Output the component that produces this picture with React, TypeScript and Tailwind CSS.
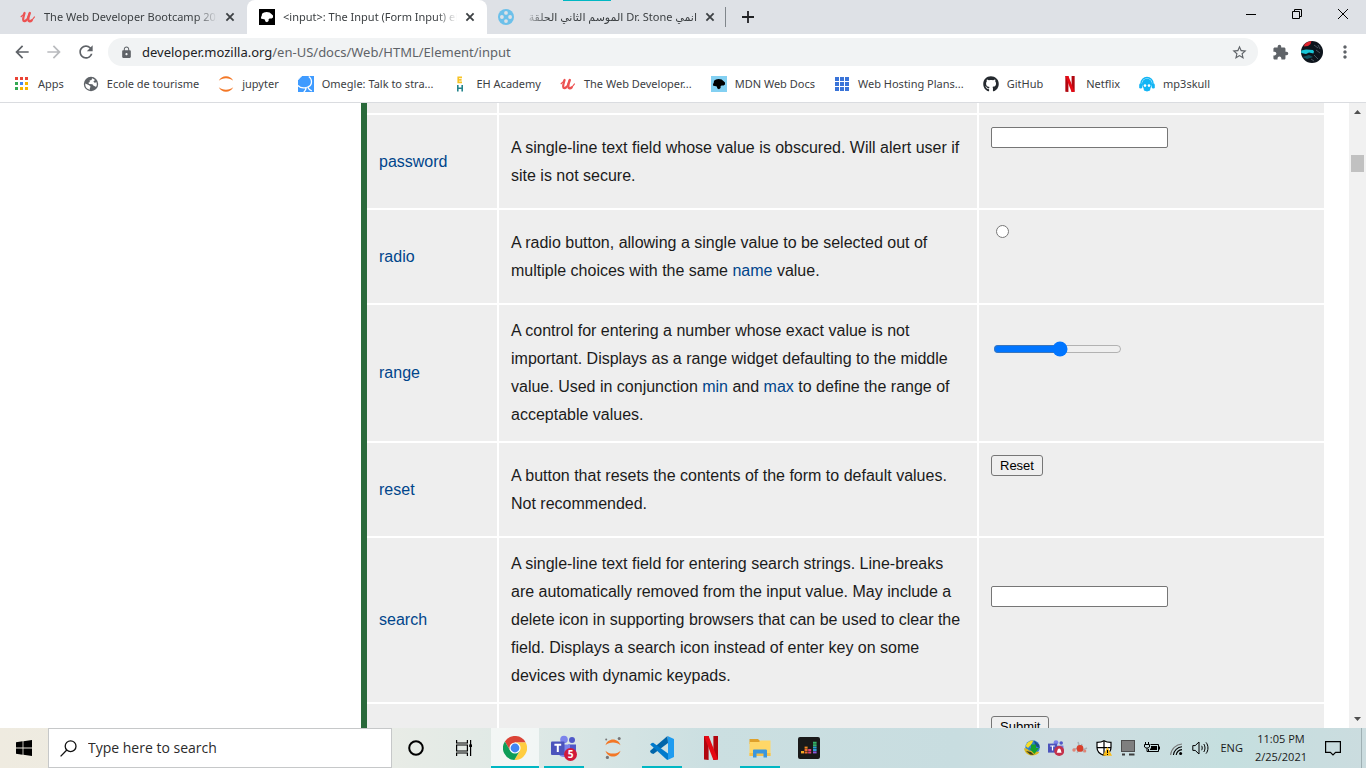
import type { ReactNode } from "react";
import {
  MdArrowBack,
  MdArrowForward,
  MdExtension,
  MdLock,
  MdMoreVert,
  MdRefresh,
  MdStarBorder,
} from "react-icons/md";
import { FaGithub } from "react-icons/fa";

/* ---------- Site icons ---------- */

function UdemyIcon() {
  return (
    <svg width="16" height="16" viewBox="0 0 16 16" fill="none" stroke="#ec5252" strokeLinecap="round" strokeLinejoin="round">
      <path d="M1.2 7.6C2.6 6.6 3.6 5.4 4.4 4" strokeWidth="1.3" />
      <path d="M4.6 4C3.9 6.4 3 8.8 3.2 10.8C3.4 12.6 5.2 12.6 6.4 11" strokeWidth="2.2" />
      <path d="M6.4 11C7.6 9.2 8.6 6.8 9.6 4" strokeWidth="1.3" />
      <path d="M9.8 4C8.9 6.4 8 8.8 8.3 10.8C8.6 12.6 10.4 12.8 11.6 11.4" strokeWidth="2.4" />
      <path d="M11.6 11.4C12.6 10.4 13.6 9.2 14.4 8" strokeWidth="1.3" />
    </svg>
  );
}

function DinoIcon({ blue = false }: { blue?: boolean }) {
  return (
    <svg width="16" height="16" viewBox="0 0 16 16">
      <rect width="16" height="16" fill={blue ? "#83d0f2" : "#000"} />
      <path
        fill={blue ? "#000" : "#fff"}
        d="M2 8.2L2.8 6.6L3 4.8L5 3.6L7.6 3L10.6 3.6L12.4 5L14 6.6L14 8.6L12.6 9.4L10.6 9.4L9.6 10.2L9.6 12L8 13.2L6.4 12.4L5.8 10.6L4 10L2.2 9.8Z"
      />
    </svg>
  );
}

function ReelIcon() {
  return (
    <svg width="16" height="16" viewBox="0 0 16 16">
      <circle cx="8" cy="8" r="8" fill="#6cc0ea" />
      <g fill="#dee1e6">
        <circle cx="8" cy="3.9" r="1.9" />
        <circle cx="8" cy="12.1" r="1.9" />
        <circle cx="3.9" cy="8" r="1.9" />
        <circle cx="12.1" cy="8" r="1.9" />
      </g>
    </svg>
  );
}

function AppsIcon() {
  return (
    <svg width="16" height="16" viewBox="0 0 16 16">
      <path fill="#ea4335" d="M1 1h3v3H1zM6 1h3v3H6zM11 1h3v3h-3z" />
      <path fill="#34a853" d="M1 6h3v3H1zM1 11h3v3H1z" />
      <path fill="#4285f4" d="M6 6h3v3H6z" />
      <path fill="#f6b400" d="M11 6h3v3h-3zM6 11h3v3H6zM11 11h3v3h-3z" />
    </svg>
  );
}

function GlobeIcon() {
  return (
    <svg width="16" height="16" viewBox="0 0 16 16">
      <circle cx="8" cy="8" r="7.2" fill="#5f6368" />
      <path
        fill="#fff"
        d="M2.2 7.6L6.2 9.2L7.6 10.8L6.8 12.2L7 13.8A6 6 0 0 1 2.2 7.6ZM9 2.2L8.6 4L6.6 4.6L6.8 6L5.4 6.8L6 8L9.4 8.2L10.6 9.8L12.4 10.4L13 11A6 6 0 0 0 13.6 6.2L11.6 6.8L10.4 5.6L12 4A6 6 0 0 0 9 2.2Z"
      />
    </svg>
  );
}

function JupyterIcon() {
  return (
    <svg width="16" height="16" viewBox="0 0 16 16" fill="#f37726">
      <path d="M.8 4.8C2.2 2 4.9 .3 8 .3S13.8 2 15.2 4.8C13.4 3.2 10.9 2.3 8 2.3S2.6 3.2 .8 4.8Z" />
      <path d="M.8 11.2C2.2 14 4.9 15.7 8 15.7S13.8 14 15.2 11.2C13.4 12.8 10.9 13.7 8 13.7S2.6 12.8 .8 11.2Z" />
    </svg>
  );
}

function OmegleIcon() {
  return (
    <svg width="16" height="16" viewBox="0 0 16 16">
      <path fill="#3f9bff" d="M0 0H16V16H0Z" />
      <g fill="none" stroke="#fff" strokeWidth="1.3">
        <path d="M0 3.6C1 2 2.2 .9 3.6 0" />
        <path d="M0 9.4C1.6 11.6 4.4 12.4 8.2 11.6C8 13.2 7.2 14.8 5.8 16" />
        <path d="M10.8 .6C12.8 2.2 13.8 4.6 13.4 7C13 9.2 11.6 10.6 9.8 11.2C10.6 13 12 14.2 13.8 14.8" />
      </g>
      <path fill="#fff" d="M0 0H3L0 3Z" />
    </svg>
  );
}

function EhIcon() {
  return (
    <svg width="16" height="16" viewBox="0 0 16 16" fill="none" strokeWidth="1.6">
      <path stroke="#f7c325" d="M10 1.4H6.2V6.4H10M6 3.9H9.6" />
      <path stroke="#23848c" d="M5.8 9V15.4M10.2 9V15.4M6 12.2H10" />
    </svg>
  );
}

function GridIcon() {
  return (
    <svg width="16" height="16" viewBox="0 0 16 16" fill="#3a74d8">
      <path d="M1 1h4v4H1zM6 1h4v4H6zM11 1h4v4h-4zM1 6h4v4H1zM6 6h4v4H6zM11 6h4v4h-4zM1 11h4v4H1zM6 11h4v4H6zM11 11h4v4h-4z" />
    </svg>
  );
}

function NetflixIcon({ size }: { size: number }) {
  return (
    <svg width={size} height={size} viewBox="0 0 24 24">
      <path fill="#b1060f" d="M5 0H9.6V24L5 23.6ZM14.4 0H19V23.6L14.4 24Z" />
      <path fill="#e50914" d="M5 0H9.6L19 23.6L14.4 24Z" />
    </svg>
  );
}

function SkullIcon() {
  return (
    <svg width="16" height="16" viewBox="0 0 16 16">
      <path d="M2 9V7.5A6 6 0 0 1 14 7.5V9" fill="none" stroke="#12b5f5" strokeWidth="1.4" />
      <path fill="#12b5f5" d="M8 2.6A5 5 0 0 1 13 8C13 10 12 11 11.6 11.8L11 14.4L8 15.6L5 14.4L4.4 11.8C4 11 3 10 3 8A5 5 0 0 1 8 2.6Z" />
      <rect x=".2" y="7.6" width="3" height="5" rx="1.4" fill="#12b5f5" />
      <rect x="12.8" y="7.6" width="3" height="5" rx="1.4" fill="#12b5f5" />
      <circle cx="6" cy="9.6" r="1.3" fill="#fff" />
      <circle cx="10" cy="9.6" r="1.3" fill="#fff" />
    </svg>
  );
}

function CloseIcon() {
  return (
    <svg width="10" height="10" viewBox="0 0 10 10" stroke="#3c4043" strokeWidth="1.8">
      <path d="M1.4 1.4L8.6 8.6M8.6 1.4L1.4 8.6" />
    </svg>
  );
}

/* ---------- Tab strip ---------- */

type TabProps = { icon: ReactNode; title: string; active?: boolean; rtl?: boolean };

function Tab({ icon, title, active, rtl }: TabProps) {
  return (
    <div
      className={
        active
          ? "flex h-full w-60 min-w-0 items-center rounded-t-lg bg-white px-3"
          : "flex h-full w-60 min-w-0 items-center pl-[11px] pr-3"
      }
    >
      <span className="shrink-0">{icon}</span>
      <span
        dir={rtl ? "rtl" : "ltr"}
        className={
          rtl
            ? "ml-2 min-w-0 flex-1 overflow-hidden whitespace-nowrap [mask-image:linear-gradient(to_left,black_85%,transparent)]"
            : "ml-2 min-w-0 flex-1 overflow-hidden whitespace-nowrap [mask-image:linear-gradient(to_right,black_88%,transparent)]"
        }
      >
        {title}
      </span>
      <button type="button" aria-label="Close tab" className="ml-2 shrink-0">
        <CloseIcon />
      </button>
    </div>
  );
}

function TabStrip() {
  return (
    <div className="relative flex h-[34px] shrink-0 bg-[#dee1e6] pl-[7px] text-[11px] text-[#3c4043]">
      <div className="absolute left-[563px] top-0 h-px w-12 bg-[#00b7c3]" />
      <Tab icon={<span className="block pl-0.5"><UdemyIcon /></span>} title="The Web Developer Bootcamp 2021" />
      <Tab icon={<DinoIcon />} title="<input>: The Input (Form Input) element" active />
      <Tab icon={<ReelIcon />} title="انمي Dr. Stone الموسم الثاني الحلقة" rtl />
      <div className="flex items-center gap-4">
        <div className="-ml-0.5 h-5 w-px bg-[#80868b]" />
        <button type="button" aria-label="New tab">
          <svg width="12" height="12" viewBox="0 0 12 12" stroke="#202124" strokeWidth="1.8">
            <path d="M6 0V12M0 6H12" />
          </svg>
        </button>
      </div>
      <div className="ml-auto flex h-7 text-black">
        <button type="button" aria-label="Minimize" className="flex w-[46px] items-center justify-center">
          <svg width="10" height="10" viewBox="0 0 10 10" stroke="currentColor">
            <path d="M0 5.5H10" />
          </svg>
        </button>
        <button type="button" aria-label="Restore" className="flex w-[46px] items-center justify-center">
          <svg width="10" height="10" viewBox="0 0 10 10" fill="none" stroke="currentColor">
            <path d="M.5 2.5H7.5V9.5H.5ZM2.5 2V.5H9.5V7.5H8" />
          </svg>
        </button>
        <button type="button" aria-label="Close" className="flex w-[46px] items-center justify-center">
          <svg width="10" height="10" viewBox="0 0 10 10" stroke="currentColor">
            <path d="M0 0L10 10M10 0L0 10" />
          </svg>
        </button>
      </div>
    </div>
  );
}

/* ---------- Toolbar ---------- */

function Avatar() {
  return (
    <svg width="22" height="22" viewBox="0 0 22 22">
      <circle cx="11" cy="11" r="11" fill="#0d141c" />
      <path d="M3.6 3A11 11 0 0 1 10.4 0L9.6 3L7 5L3 5.4Z" fill="#e0222c" />
      <path d="M.2 9.4L5 8.6L12 9L13 10.4L12.4 12.4L8 11.4L5 13L.2 12Z" fill="#18c7d8" />
      <path d="M1.5 16L8 14L12 16L6 18Z" fill="#0f5563" />
      <path d="M13 4L17 7M15 9L19 12M13 14L17 18M17 4L19 8M10 18L13 20" stroke="#4a5560" />
    </svg>
  );
}

function Toolbar() {
  return (
    <div className="flex h-9 shrink-0 items-center bg-white pl-3 pr-[11px] text-[#5f6368]">
      <div className="flex gap-3">
        <button type="button" aria-label="Back">
          <MdArrowBack size={20} />
        </button>
        <button type="button" aria-label="Forward" className="text-[#b9bbbe]">
          <MdArrowForward size={20} />
        </button>
        <button type="button" aria-label="Reload">
          <MdRefresh size={20} />
        </button>
      </div>
      <div className="ml-3 flex h-7 min-w-0 flex-1 items-center rounded-full bg-[#f1f3f4] pl-3 pr-2.5">
        <MdLock size={13} />
        <div className="relative ml-[9px] min-w-0 flex-1 text-[13px] leading-5">
          <div aria-hidden="true" className="overflow-hidden whitespace-nowrap">
            <span className="text-[#202124]">developer.mozilla.org</span>
            <span>/en-US/docs/Web/HTML/Element/input</span>
          </div>
          <input
            type="text"
            aria-label="Address and search bar"
            defaultValue="developer.mozilla.org/en-US/docs/Web/HTML/Element/input"
            className="absolute inset-0 w-full bg-transparent text-transparent caret-black outline-none"
          />
        </div>
        <button type="button" aria-label="Bookmark this page">
          <MdStarBorder size={17} />
        </button>
      </div>
      <div className="ml-3.5 flex items-center">
        <button type="button" aria-label="Extensions">
          <MdExtension size={17} />
        </button>
        <button type="button" aria-label="Profile" className="ml-3">
          <Avatar />
        </button>
        <button type="button" aria-label="Menu" className="ml-3">
          <MdMoreVert size={20} />
        </button>
      </div>
    </div>
  );
}

/* ---------- Bookmarks ---------- */

const bookmarks: { label: string; icon: ReactNode }[] = [
  { label: "Apps", icon: <AppsIcon /> },
  { label: "Ecole de tourisme", icon: <GlobeIcon /> },
  { label: "jupyter", icon: <JupyterIcon /> },
  { label: "Omegle: Talk to stra...", icon: <OmegleIcon /> },
  { label: "EH Academy", icon: <EhIcon /> },
  { label: "The Web Developer...", icon: <UdemyIcon /> },
  { label: "MDN Web Docs", icon: <DinoIcon blue /> },
  { label: "Web Hosting Plans...", icon: <GridIcon /> },
  { label: "GitHub", icon: <FaGithub size={16} color="#24292e" /> },
  { label: "Netflix", icon: <NetflixIcon size={16} /> },
  { label: "mp3skull", icon: <SkullIcon /> },
];

function BookmarkBar() {
  return (
    <nav className="flex shrink-0 gap-[19px] overflow-hidden border-b border-[#dadce0] bg-white pb-1 pl-3.5 text-[11px] text-[#3c4043]">
      {bookmarks.map((b) => (
        <a key={b.label} href="#" className="flex h-7 shrink-0 items-center gap-2 whitespace-nowrap">
          {b.icon}
          {b.label}
        </a>
      ))}
    </nav>
  );
}

/* ---------- Article ---------- */

const linkClass = "text-[#00458b]";
const fieldClass = "block h-[21px] w-[177px] rounded-xs border border-[#767676] bg-white px-1 text-[13px]";
const buttonClass =
  "block h-[21px] rounded-[3px] border border-[#767676] bg-[#efefef] px-2 text-[13px] leading-4 text-black";

const rows: { type: string; text: ReactNode; demo: ReactNode }[] = [
  {
    type: "password",
    text: "A single-line text field whose value is obscured. Will alert user if site is not secure.",
    demo: <input type="password" aria-label="Password example" className={fieldClass} />,
  },
  {
    type: "radio",
    text: (
      <>
        A radio button, allowing a single value to be selected out of multiple choices with the same{" "}
        <a href="#name" className={linkClass}>name</a> value.
      </>
    ),
    demo: <input type="radio" aria-label="Radio example" className="mx-[5px] my-[3px] block" />,
  },
  {
    type: "range",
    text: (
      <>
        A control for entering a number whose exact value is not important. Displays as a range widget
        defaulting to the middle value. Used in conjunction{" "}
        <a href="#min" className={linkClass}>min</a> and <a href="#max" className={linkClass}>max</a> to
        define the range of acceptable values.
      </>
    ),
    demo: (
      <input
        type="range"
        defaultValue={52}
        aria-label="Range example"
        className="m-0.5 block h-4 w-[129px] accent-[#0075ff]"
      />
    ),
  },
  {
    type: "reset",
    text: "A button that resets the contents of the form to default values. Not recommended.",
    demo: <button type="reset" className={buttonClass}>Reset</button>,
  },
  {
    type: "search",
    text: "A single-line text field for entering search strings. Line-breaks are automatically removed from the input value. May include a delete icon in supporting browsers that can be used to clear the field. Displays a search icon instead of enter key on some devices with dynamic keypads.",
    demo: <input type="search" aria-label="Search example" className={fieldClass} />,
  },
  {
    type: "",
    text: "",
    demo: <button type="submit" className={buttonClass}>Submit</button>,
  },
];

function Article() {
  return (
    <main className="min-w-0 flex-1 overflow-hidden bg-white pl-[361px] pr-[25px]">
      <table className="w-full table-fixed border-separate border-spacing-0 border-l-[6px] border-[#29693a] font-['Liberation_Sans',Arial,sans-serif] text-base leading-7 text-[#1b1b1b]">
        <colgroup>
          <col className="w-[132px]" />
          <col className="w-[480px]" />
          <col />
        </colgroup>
        <tbody className="bg-[#eeeeee]">
          <tr>
            <td className="h-3 border-b-2 border-r-2 border-white" />
            <td className="h-3 border-b-2 border-r-2 border-white" />
            <td className="h-3 border-b-2 border-white" />
          </tr>
          {rows.map((row) => (
            <tr key={row.type}>
              <td className="border-b-2 border-r-2 border-white p-3">
                {row.type && <a href={"#" + row.type} className={linkClass}>{row.type}</a>}
              </td>
              <td className="border-b-2 border-r-2 border-white p-3">{row.text}</td>
              <td className="border-b-2 border-white p-3">
                <div className="flow-root h-[69px]">{row.demo}</div>
              </td>
            </tr>
          ))}
        </tbody>
      </table>
    </main>
  );
}

function Scrollbar() {
  return (
    <div aria-hidden="true" className="flex w-[17px] shrink-0 flex-col items-center bg-[#f1f1f1] py-[7px]">
      <svg width="7" height="4" viewBox="0 0 7 4" fill="#505050">
        <path d="M3.5 0L7 4H0Z" />
      </svg>
      <div className="mt-[41px] h-[17px] w-[13px] bg-[#c1c1c1]" />
      <svg width="7" height="4" viewBox="0 0 7 4" fill="#505050" className="mt-auto">
        <path d="M0 0H7L3.5 4Z" />
      </svg>
    </div>
  );
}

/* ---------- Taskbar ---------- */

function ChromeLogo() {
  return (
    <svg width="24" height="24" viewBox="0 0 24 24">
      <path fill="#db4437" d="M1.9 5.5A12 12 0 0 1 22.7 6.5L12 6.5L7.24 14.75Z" />
      <path fill="#ffcd40" d="M22.7 6.5A12 12 0 0 1 11.4 24L16.76 14.75L12 6.5Z" />
      <path fill="#0f9d58" d="M11.4 24A12 12 0 0 1 1.9 5.5L7.24 14.75L16.76 14.75Z" />
      <circle cx="12" cy="12" r="5.6" fill="#fff" />
      <circle cx="12" cy="12" r="4.4" fill="#4285f4" />
    </svg>
  );
}

function TeamsLogo() {
  return (
    <span className="relative block">
      <svg width="26" height="26" viewBox="0 0 26 26">
        <circle cx="21" cy="5" r="3" fill="#5059c9" />
        <circle cx="13" cy="4.5" r="3.8" fill="#7b83eb" />
        <path d="M17 9.5H25V17A4 4 0 0 1 18 18Z" fill="#5059c9" />
        <path d="M7 9.5H19V18A6.5 6.5 0 0 1 7 18Z" fill="#7b83eb" />
        <rect y="6.5" width="13.5" height="13.5" rx="1" fill="#4b53bc" />
        <path d="M3.4 9.8H10.2M6.8 9.8V17" stroke="#fff" strokeWidth="2" />
        <circle cx="19.5" cy="19.5" r="6.5" fill="#d1193a" />
      </svg>
      <span className="absolute bottom-0 right-0 w-[13px] text-center text-[10px] font-bold leading-[13px] text-white">
        5
      </span>
    </span>
  );
}

function JupyterLogo() {
  return (
    <svg width="24" height="24" viewBox="0 0 24 24">
      <g fill="#f37726">
        <path d="M4.5 9.2C5.6 5.8 8.6 3.6 12 3.6S18.4 5.8 19.5 9.2C17.6 7.2 15 6.4 12 6.4S6.4 7.2 4.5 9.2Z" />
        <path d="M4.5 14.8C5.6 18.4 8.6 20.6 12 20.6S18.4 18.4 19.5 14.8C17.6 16.8 15 17.6 12 17.6S6.4 16.8 4.5 14.8Z" />
      </g>
      <g fill="#767677">
        <circle cx="18.2" cy="2.4" r="1.5" />
        <circle cx="6.4" cy="21.4" r="1.6" />
        <circle cx="5.2" cy="3.4" r="1" />
      </g>
    </svg>
  );
}

function CodeLogo() {
  return (
    <svg width="24" height="24" viewBox="0 0 24 24">
      <path fill="#0065a9" d="M17.5 0L18 7L3.4 18L1.4 17.2L.2 16L.2 14.8Z" />
      <path fill="#007acc" d="M.2 8.6L1.8 7L3.2 6.8L18 17.6V24L16.6 23.4Z" />
      <path fill="#1f9cf0" d="M17.5 0L24 3V21L17.5 24C17.9 23.6 18 23 18 22.4V1.6C18 1 17.9 .4 17.5 0Z" />
    </svg>
  );
}

function FolderLogo() {
  return (
    <svg width="24" height="24" viewBox="0 0 24 24">
      <path fill="#dfa12a" d="M1.5 3H10L12 5V8H1.5Z" />
      <path fill="#ffd767" d="M1.5 6H11L12.5 4.5H22.5V20H1.5Z" />
      <path fill="#f5c04a" d="M1.5 17H22.5V20H1.5Z" />
      <path fill="#3b97dc" d="M5 14.5C5 13.7 5.6 13.5 6 13.5H18C18.9 13.5 19 14.4 19 14.8V21.5H15.5V17.5H8.5V21.5H5Z" />
    </svg>
  );
}

function DeezerLogo() {
  return (
    <svg width="22" height="22" viewBox="0 0 22 22">
      <rect width="22" height="22" rx="2" fill="#191919" />
      <path fill="#f5a623" d="M3 14h3v2.4H3z" />
      <path fill="#f58a1f" d="M6.6 9.6h3v2h-3z" />
      <path fill="#ef6a2c" d="M6.6 12h3v2h-3zM6.6 14.4h3v2h-3z" />
      <path fill="#e0407a" d="M10.2 12h3v2h-3zM10.2 14.4h3v2h-3z" />
      <path fill="#8c5be0" d="M15 14.4h3.6v2H15z" />
      <path fill="#2a9fd6" d="M15 9.6h3.6v2H15zM15 12h3.6v2H15z" />
      <path fill="#35b46a" d="M15 4.8h3.6v2H15zM15 7.2h3.6v2H15z" />
    </svg>
  );
}

const pinned: { name: string; icon: ReactNode; open?: boolean; focused?: boolean }[] = [
  { name: "Google Chrome", icon: <ChromeLogo />, focused: true },
  { name: "Microsoft Teams", icon: <TeamsLogo />, open: true },
  { name: "Jupyter", icon: <JupyterLogo /> },
  { name: "Visual Studio Code", icon: <CodeLogo />, open: true },
  { name: "Netflix", icon: <NetflixIcon size={24} /> },
  { name: "File Explorer", icon: <FolderLogo />, open: true },
  { name: "Deezer", icon: <DeezerLogo /> },
];

function TrayIcons() {
  return (
    <div className="flex items-center gap-2">
      <svg width="16" height="16" viewBox="0 0 16 16" aria-label="Download manager">
        <circle cx="8.6" cy="7.4" r="7.2" fill="#2f7fd0" />
        <path d="M1.6 6C3 1.6 6.6 .2 9.4 .4L7.6 4L4 8Z" fill="#f4dc2a" />
        <path d="M10 .6L15 4.6L15.6 8L11.4 6Z" fill="#1b4f86" />
        <path d="M0 8.6C2 7.6 4 9 5 10.6L9 11L15.4 12C14 14.6 10 16 6.6 15.4C3.4 15 .6 12.4 0 8.6Z" fill="#d8b822" />
        <path d="M2 11L6 14.6L10 15L7 12Z" fill="#3c3c20" />
        <path d="M7 4.6H12V8H15L10.4 14L5.4 8.4H7Z" fill="#14a02e" />
      </svg>
      <svg width="16" height="16" viewBox="0 0 16 16" aria-label="Teams">
        <circle cx="8" cy="2.6" r="2.4" fill="#7b83eb" />
        <circle cx="13.2" cy="3" r="1.8" fill="#5059c9" />
        <path d="M5 5.6H15.4V12H5Z" fill="#6b73dc" />
        <rect y="3.6" width="9" height="9" fill="#4b53bc" />
        <path d="M2.2 6H6.8M4.5 6V10.6" stroke="#fff" strokeWidth="1.2" />
        <circle cx="11.2" cy="11" r="5" fill="#c4314b" />
        <path d="M8.6 12.8C9.4 12 9.2 8.4 11.2 8.4S13 12 13.8 12.8Z" fill="#fff" />
      </svg>
      <svg width="16" height="16" viewBox="0 0 16 16" aria-label="Updater">
        <path d="M1 9.6L6 8L11 10L15 8M6 2L8 8L5 12.6M12 12L9 9M10 4L8.6 7" stroke="#a9b2b6" strokeWidth="1.5" fill="none" />
        <ellipse cx="8" cy="8.4" rx="3.4" ry="3.4" fill="#d8402c" />
        <circle cx="2" cy="10" r="1.7" fill="#e08678" />
        <circle cx="12.8" cy="11" r="1.5" fill="#e08678" />
      </svg>
      <svg width="16" height="16" viewBox="0 0 16 16" aria-label="Security">
        <path d="M8 .8C6 2 3.6 2.4 1 2.4V7.6C1 11.6 4 14.2 8 15.4C12 14.2 15 11.6 15 7.6V2.4C12.4 2.4 10 2 8 .8Z" fill="#fff" stroke="#000" strokeWidth="1.2" />
        <path d="M8 1V15M1 7.6H15" stroke="#000" strokeWidth="1.2" />
        <path d="M11.4 7L16 15.8H7Z" fill="#fbbc16" />
        <path d="M11.5 10V13M11.5 14V15" stroke="#000" />
      </svg>
      <svg width="16" height="16" viewBox="0 0 16 16" aria-label="Display">
        <rect x="1.5" y=".5" width="13" height="11" fill="#7f7f7f" stroke="#4d4d4d" />
        <path d="M2 14.5H5M9 14.5H14.5" stroke="#3c3c3c" strokeWidth="2" />
      </svg>
      <svg width="16" height="16" viewBox="0 0 16 16" aria-label="Battery" fill="none" stroke="#000">
        <path d="M1.5 2V4.5M4.5 2V4.5M.5 4.5H5.5V7L4 8H2L.5 7ZM3 8V11.5H5" />
        <path d="M6.5 4.5H14.5V11.5H4.5V9" />
        <path d="M7 6H13V10H6V8.5H7Z" fill="#000" stroke="none" />
        <path d="M15.5 6.5V9.5" />
      </svg>
      <svg width="16" height="16" viewBox="0 0 16 16" aria-label="Wireless network" fill="none" stroke="#000" strokeWidth="1.1">
        <path d="M2.6 15A12 12 0 0 1 14 4" stroke="#777" />
        <path d="M5.4 15A9 9 0 0 1 14 6.8M8.2 15A6.4 6.4 0 0 1 14 9.6" />
        <circle cx="12.6" cy="13.6" r="1.5" fill="#000" stroke="none" />
      </svg>
      <svg width="18" height="16" viewBox="0 0 18 16" aria-label="Volume" fill="none" stroke="#000">
        <path d="M.8 5.6H3.2L7 2V14L3.2 10.4H.8Z" />
        <path d="M9.6 5.8C10.4 7 10.4 9 9.6 10.2M11.8 4C13.4 6.2 13.4 9.8 11.8 12M14 2.4C16.6 5.4 16.6 10.6 14 13.6" />
      </svg>
    </div>
  );
}

function Taskbar() {
  return (
    <footer className="flex h-10 shrink-0 bg-[linear-gradient(to_right,#efebe0_0%,#e9ece6_28%,#dfe9e6_38%,#cbdfe1_52%,#c8dde0_70%,#cfdde1_78%,#c5dfdf_90%,#cbdcdf_100%)] font-['Open_Sans','Noto_Sans',sans-serif] text-[#1a1a1a]">
      <button type="button" aria-label="Start" className="flex w-12 shrink-0 items-center justify-center">
        <svg width="16" height="16" viewBox="0 0 16 16" fill="#000">
          <path d="M0 2.2L6.6 1.3V7.6H0ZM7.4 1.2L16 0V7.6H7.4ZM0 8.4H6.6V14.7L0 13.8ZM7.4 8.4H16V16L7.4 14.8Z" />
        </svg>
      </button>
      <label className="flex w-[344px] shrink-0 items-center gap-[11px] border border-[#c6c8c9] bg-white pl-[11px]">
        <svg width="17" height="17" viewBox="0 0 17 17" fill="none" stroke="#111" strokeWidth="1.3">
          <circle cx="10.6" cy="6.2" r="5.4" />
          <path d="M6.8 10L.6 16.4" />
        </svg>
        <input
          type="text"
          aria-label="Type here to search"
          placeholder="Type here to search"
          className="min-w-0 flex-1 bg-transparent text-sm outline-none placeholder:text-[#2b2b2b]"
        />
      </label>
      <div className="flex gap-px">
        <button type="button" aria-label="Cortana" className="flex w-12 items-center justify-center">
          <svg width="16" height="16" viewBox="0 0 16 16" fill="none" stroke="#000" strokeWidth="2">
            <circle cx="8" cy="8" r="6.8" />
          </svg>
        </button>
        <button type="button" aria-label="Task view" className="mr-px flex w-12 items-center justify-center pr-0.5">
          <svg width="16" height="16" viewBox="0 0 16 16" fill="none" stroke="#000" strokeWidth="1.2">
            <path d="M.6 0V3H11.4V0M.6 16V13H11.4V16M.6 5H11.4V11H.6ZM14.6 0V16" />
            <path d="M13.2 4.4H16V7H13.2Z" fill="#000" stroke="none" />
          </svg>
        </button>
        {pinned.map((app) => (
          <button
            key={app.name}
            type="button"
            aria-label={app.name}
            className={app.focused ? "flex w-12 flex-col items-center bg-white/60" : "flex w-12 flex-col items-center"}
          >
            <span className="flex flex-1 items-center pt-0.5">{app.icon}</span>
            <span
              className={
                app.focused
                  ? "h-0.5 w-full bg-[#00b7c3]"
                  : app.open
                    ? "h-0.5 w-10 bg-[#00b7c3]"
                    : "h-0.5 w-10"
              }
            />
          </button>
        ))}
      </div>
      <div className="ml-auto flex items-center text-[11px]">
        <TrayIcons />
        <span className="ml-2.5">ENG</span>
        <div className="ml-3 text-center leading-[18px]">
          <div>11:05 PM</div>
          <div>2/25/2021</div>
        </div>
        <button type="button" aria-label="Notifications" className="ml-[18px]">
          <svg width="16" height="16" viewBox="0 0 16 16" fill="none" stroke="#000" strokeWidth="1.2">
            <path d="M.6 1.6H15.4V12.4H10.6L8 15L5.4 12.4H.6Z" />
          </svg>
        </button>
        <div className="ml-5 mr-1 h-10 w-px bg-[#9fb0b4]" />
      </div>
    </footer>
  );
}

export default function App() {
  return (
    <div className="flex h-screen flex-col overflow-hidden bg-white font-['Noto_Sans','Open_Sans','DejaVu_Sans',sans-serif]">
      <TabStrip />
      <Toolbar />
      <BookmarkBar />
      <div className="flex min-h-0 flex-1">
        <Article />
        <Scrollbar />
      </div>
      <Taskbar />
    </div>
  );
}
